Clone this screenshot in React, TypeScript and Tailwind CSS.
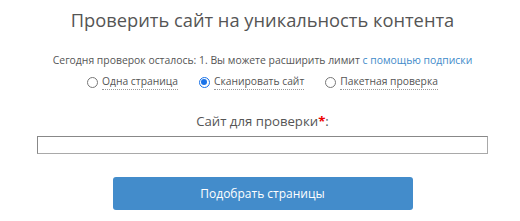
const options = [
  { label: "Одна страница", checked: false },
  { label: "Сканировать сайт", checked: true },
  { label: "Пакетная проверка", checked: false },
];

export default function App() {
  return (
    <div className="w-[520px] h-[221px] bg-white pl-[5px] text-[#555] font-['Open_Sans',sans-serif] flex flex-col items-center">
      <h1 className="mt-[7px] text-[18.3px] leading-[26px] text-[#555]">
        Проверить сайт на уникальность контента
      </h1>

      <p className="mt-[20px] text-[10.4px] leading-[15px] text-[#555]">
        Сегодня проверок осталось: 1. Вы можете расширить лимит{" "}
        <a className="text-[#428bca]">с помощью подписки</a>
      </p>

      <div className="mt-[6px] flex items-center gap-[21px] text-[10.3px] leading-[15px]">
        {options.map((o) => (
          <label key={o.label} className="flex items-center gap-[4px]">
            {o.checked ? (
              <span className="w-[11px] h-[11px] rounded-full border border-[#1a73e8] bg-white flex items-center justify-center">
                <span className="w-[6px] h-[6px] rounded-full bg-[#1a73e8]" />
              </span>
            ) : (
              <span className="w-[11px] h-[11px] rounded-full border border-[#777] bg-white" />
            )}
            <span className="border-b border-dotted border-[#999]">{o.label}</span>
          </label>
        ))}
      </div>

      <div className="mt-[21px] text-[13.2px] leading-[20px]">
        Сайт для проверки<span className="text-[#e00] font-bold">*</span>:
      </div>

      <input
        type="text"
        className="mt-[5px] w-[451px] h-[18px] border border-[#a9a9a9] border-t-[#888] border-l-[#888] bg-white outline-none"
      />

      <button className="mt-[23px] w-[300px] h-[33px] rounded-[3px] bg-[#438ccb] text-white text-[12px]">
        Подобрать страницы
      </button>
    </div>
  );
}
